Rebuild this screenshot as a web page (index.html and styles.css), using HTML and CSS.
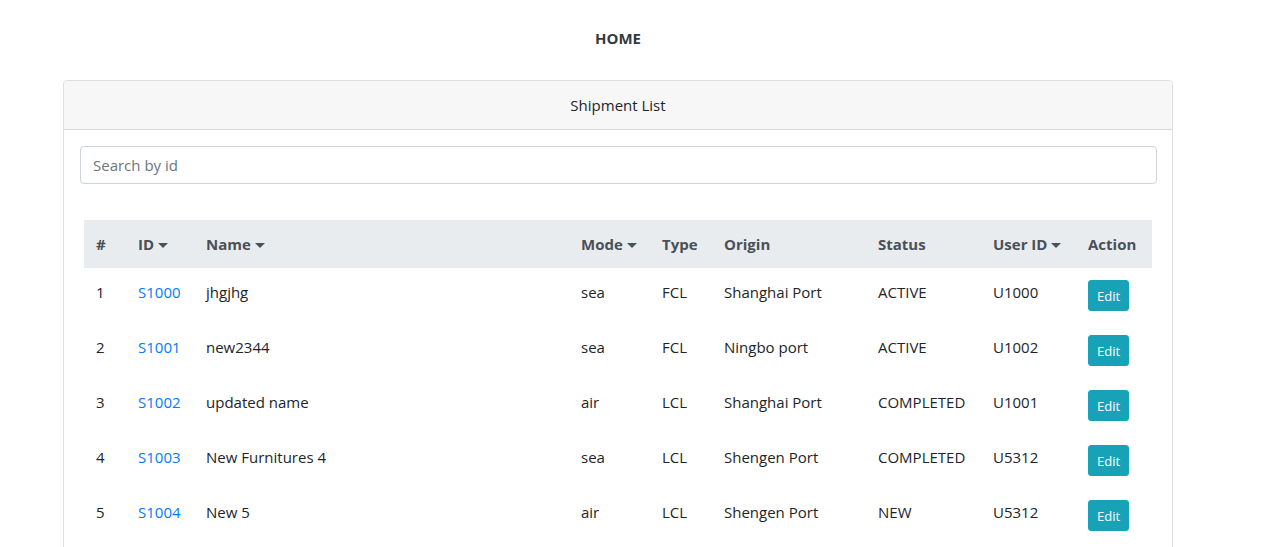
FILE: index.html
```html
<!DOCTYPE html>
<html>
<head>
<meta charset="utf-8">
<link rel="stylesheet" href="styles.css">
</head>
<body>
<div class="page">
  <nav class="topnav"><a class="home" href="#">HOME</a></nav>
  <div class="card">
    <div class="card-header">Shipment List</div>
    <div class="card-body">
      <input class="search" type="text" placeholder="Search by id">
      <div class="table-wrap">
        <table class="table">
          <colgroup>
            <col class="c1"><col class="c2"><col class="c3"><col class="c4"><col class="c5"><col class="c6"><col class="c7"><col class="c8"><col class="c9">
          </colgroup>
          <thead>
            <tr>
              <th>#</th>
              <th>ID<span class="caret"></span></th>
              <th>Name<span class="caret"></span></th>
              <th>Mode<span class="caret"></span></th>
              <th>Type</th>
              <th>Origin</th>
              <th>Status</th>
              <th>User ID<span class="caret"></span></th>
              <th>Action</th>
            </tr>
          </thead>
          <tbody>
            <tr><td>1</td><td><a href="#">S1000</a></td><td>jhgjhg</td><td>sea</td><td>FCL</td><td>Shanghai Port</td><td>ACTIVE</td><td>U1000</td><td><button class="btn">Edit</button></td></tr>
            <tr><td>2</td><td><a href="#">S1001</a></td><td>new2344</td><td>sea</td><td>FCL</td><td>Ningbo port</td><td>ACTIVE</td><td>U1002</td><td><button class="btn">Edit</button></td></tr>
            <tr><td>3</td><td><a href="#">S1002</a></td><td>updated name</td><td>air</td><td>LCL</td><td>Shanghai Port</td><td>COMPLETED</td><td>U1001</td><td><button class="btn">Edit</button></td></tr>
            <tr><td>4</td><td><a href="#">S1003</a></td><td>New Furnitures 4</td><td>sea</td><td>LCL</td><td>Shengen Port</td><td>COMPLETED</td><td>U5312</td><td><button class="btn">Edit</button></td></tr>
            <tr><td>5</td><td><a href="#">S1004</a></td><td>New 5</td><td>air</td><td>LCL</td><td>Shengen Port</td><td>NEW</td><td>U5312</td><td><button class="btn">Edit</button></td></tr>
          </tbody>
        </table>
      </div>
    </div>
  </div>
</div>
</body>
</html>
```
FILE: styles.css
```css
html, body {
  margin: 0;
  padding: 0;
  background: #fff;
}
body {
  font-family: "Open Sans", "Noto Sans", sans-serif;
  font-size: 15px;
  line-height: 24px;
  color: #212529;
}
.page {
  width: 1236px;
  display: flex;
  flex-direction: column;
  align-items: center;
}
.topnav {
  padding-top: 26px;
  height: 80px;
  box-sizing: border-box;
  display: flex;
  justify-content: center;
}
.home {
  font-weight: 700;
  font-size: 15px;
  color: #343a40;
  text-decoration: none;
}
.card {
  width: 1110px;
  border: 1px solid rgba(0,0,0,.125);
  border-radius: 4px;
  box-sizing: border-box;
}
.card-header {
  height: 48px;
  background: #f7f7f7;
  border-bottom: 1px solid rgba(0,0,0,.125);
  border-radius: 3px 3px 0 0;
  display: flex;
  align-items: center;
  justify-content: center;
  color: #212529;
}
.card-body {
  padding: 16px 15px 16px 16px;
}
.search {
  display: block;
  width: 100%;
  box-sizing: border-box;
  height: 38px;
  padding: 6px 12px;
  font-family: inherit;
  font-size: 15px;
  color: #495057;
  border: 1px solid #ced4da;
  border-radius: 4px;
  outline: none;
}
.search::placeholder {
  color: #6c757d;
}
.table-wrap {
  padding: 36px 4px 0;
}
.table {
  width: 1068px;
  table-layout: fixed;
  border-collapse: collapse;
}
.c1 { width: 42px; }
.c2 { width: 68px; }
.c3 { width: 375px; }
.c4 { width: 81px; }
.c5 { width: 62px; }
.c6 { width: 154px; }
.c7 { width: 115px; }
.c8 { width: 95px; }
.c9 { width: 76px; }
.table th {
  background: #e9ecef;
  color: #495057;
  font-weight: 700;
  text-align: left;
  padding: 12px;
  height: 48px;
  box-sizing: border-box;
  white-space: nowrap;
}
.table td {
  padding: 12px;
  height: 55px;
  box-sizing: border-box;
  vertical-align: top;
  white-space: nowrap;
}
.table a {
  color: #007bff;
  text-decoration: none;
}
.caret {
  display: inline-block;
  width: 0;
  height: 0;
  margin-left: 4px;
  vertical-align: middle;
  border-left: 5px solid transparent;
  border-right: 5px solid transparent;
  border-top: 5px solid #495057;
}
.btn {
  display: block;
  font-family: inherit;
  font-size: 13px;
  line-height: 21px;
  padding: 5px 8px 3px;
  color: #fff;
  background: #17a2b8;
  border: 1px solid #17a2b8;
  border-radius: 3px;
}
```
